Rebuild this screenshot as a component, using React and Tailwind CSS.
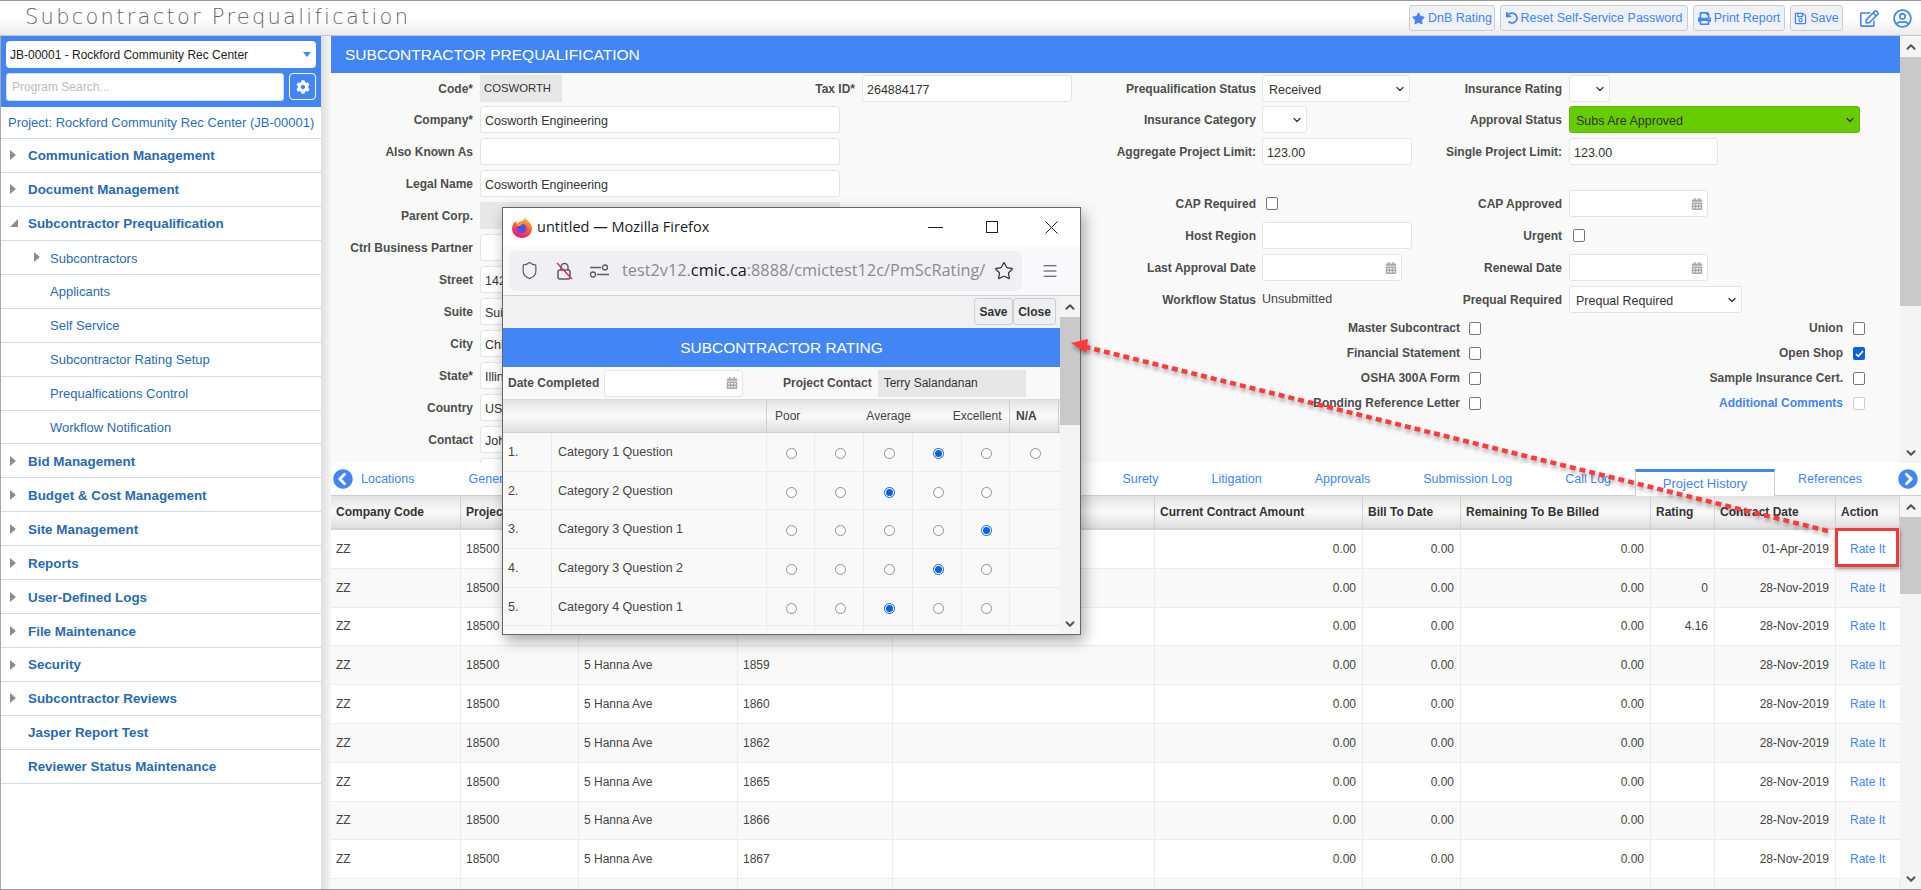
import { ChevronDown, ChevronUp, Menu, Shield, Star } from "lucide-react";
import {
  FaCalendarAlt,
  FaChevronCircleLeft,
  FaChevronCircleRight,
  FaCog,
  FaPrint,
  FaRegEdit,
  FaRegSave,
  FaRegUserCircle,
  FaStar,
  FaUndo,
} from "react-icons/fa";

const MENU = [
  { label: "Communication Management", level: 0, arrow: "right" },
  { label: "Document Management", level: 0, arrow: "right" },
  { label: "Subcontractor Prequalification", level: 0, arrow: "down" },
  { label: "Subcontractors", level: 1, arrow: "right" },
  { label: "Applicants", level: 1 },
  { label: "Self Service", level: 1 },
  { label: "Subcontractor Rating Setup", level: 1 },
  { label: "Prequalfications Control", level: 1 },
  { label: "Workflow Notification", level: 1 },
  { label: "Bid Management", level: 0, arrow: "right" },
  { label: "Budget & Cost Management", level: 0, arrow: "right" },
  { label: "Site Management", level: 0, arrow: "right" },
  { label: "Reports", level: 0, arrow: "right" },
  { label: "User-Defined Logs", level: 0, arrow: "right" },
  { label: "File Maintenance", level: 0, arrow: "right" },
  { label: "Security", level: 0, arrow: "right" },
  { label: "Subcontractor Reviews", level: 0, arrow: "right" },
  { label: "Jasper Report Test", level: 0 },
  { label: "Reviewer Status Maintenance", level: 0 },
];

const TABLE_COLS =
  "grid grid-cols-[130px_118px_159px_155px_262px_208px_98px_190px_64px_121px_64px]";

const HEADERS = [
  "Company Code",
  "Project Code",
  "Project Name",
  "Contract Code",
  "",
  "Current Contract Amount",
  "Bill To Date",
  "Remaining To Be Billed",
  "Rating",
  "Contract Date",
  "Action",
];

const ROWS = [
  { id: "1856", rating: "", date: "01-Apr-2019" },
  { id: "1857", rating: "0", date: "28-Nov-2019" },
  { id: "1858", rating: "4.16", date: "28-Nov-2019" },
  { id: "1859", rating: "", date: "28-Nov-2019" },
  { id: "1860", rating: "", date: "28-Nov-2019" },
  { id: "1862", rating: "", date: "28-Nov-2019" },
  { id: "1865", rating: "", date: "28-Nov-2019" },
  { id: "1866", rating: "", date: "28-Nov-2019" },
  { id: "1867", rating: "", date: "28-Nov-2019" },
];

const QUESTIONS = [
  { n: "1.", q: "Category 1 Question", checked: 3, na: true },
  { n: "2.", q: "Category 2 Question", checked: 2 },
  { n: "3.", q: "Category 3 Question 1", checked: 4 },
  { n: "4.", q: "Category 3 Question 2", checked: 3 },
  { n: "5.", q: "Category 4 Question 1", checked: 2 },
];

const Label = ({ children, className }) => (
  <div className={`shrink-0 text-right text-[12px] font-bold leading-[29px] whitespace-nowrap text-[#4d4d4d] ${className}`}>
    {children}
  </div>
);

const Input = ({ value, className, bg = "bg-white" }) => (
  <input
    readOnly
    value={value || ""}
    className={`h-[27px] shrink-0 rounded-[3px] border border-[#e2e4e8] px-[4px] pt-[3px] text-[12.5px] text-[#333] outline-none ${bg} ${className}`}
  />
);

const ReadOnly = ({ value, className, size = "text-[12px]" }) => (
  <div className={`h-[27px] shrink-0 whitespace-nowrap bg-[#e7e7e7] px-[4px] leading-[27px] text-[#333] ${size} ${className}`}>
    {value}
  </div>
);

const Select = ({ value, className, bg = "bg-white border-[#e2e4e8]" }) => (
  <div className={`flex h-[27px] shrink-0 items-center justify-between rounded-[3px] border pl-[6px] pr-[3px] text-[12.5px] text-[#333] ${bg} ${className}`}>
    <span className="mt-[3px]">{value}</span>
    <ChevronDown size={12} strokeWidth={2.5} className="text-[#333]" />
  </div>
);

const DateInput = ({ className }) => (
  <div className={`flex h-[27px] shrink-0 items-center justify-end rounded-[3px] border border-[#e2e4e8] bg-white pr-[4px] ${className}`}>
    <FaCalendarAlt size={12} className="text-[#a9a9a9]" />
  </div>
);

const Check = ({ checked, faint, className = "" }) =>
  checked ? (
    <span className={`flex h-[13px] w-[12px] shrink-0 items-center justify-center rounded-[2px] bg-[#0b62d8] ${className}`}>
      <svg width="9" height="9" viewBox="0 0 9 9">
        <path d="M1 5l2.3 2.3L8 2" fill="none" stroke="#fff" strokeWidth="1.6" />
      </svg>
    </span>
  ) : (
    <span className={`block h-[13px] w-[12px] shrink-0 rounded-[2px] border bg-white ${faint ? "border-[#cfcfcf]" : "border-[#77757f]"} ${className}`} />
  );

const Radio = ({ on }) =>
  on ? (
    <span className="flex h-[11px] w-[11px] items-center justify-center rounded-full border border-[#0b62d8] bg-white">
      <span className="h-[7px] w-[7px] rounded-full bg-[#0b62d8]" />
    </span>
  ) : (
    <span className="h-[11px] w-[11px] rounded-full border border-[#8f8f8f] bg-white" />
  );

const Scrollbar = ({ thumb, className }) => (
  <div className={`flex shrink-0 flex-col bg-[#f4f4f4] ${className}`}>
    <div className="flex h-[21px] shrink-0 items-center justify-center">
      <ChevronUp size={14} strokeWidth={3.5} className="text-[#555]" />
    </div>
    <div className={`shrink-0 bg-[#c9c9c9] ${thumb}`} />
    <div className="flex-1" />
    <div className="flex h-[21px] shrink-0 items-center justify-center">
      <ChevronDown size={14} strokeWidth={3.5} className="text-[#555]" />
    </div>
  </div>
);

const ToolButton = ({ icon, className, children }) => (
  <button className={`flex h-[26px] items-center justify-center gap-[3px] rounded-[3px] border border-[#c8ccd3] bg-[#eff1f4] text-[12.5px] whitespace-nowrap text-[#4285f4] ${className}`}>
    {icon}
    {children}
  </button>
);

const FirefoxLogo = () => (
  <svg width="20" height="21" viewBox="0 0 20 21">
    <defs>
      <linearGradient id="ffBody" x1="0.7" y1="0" x2="0.3" y2="1">
        <stop offset="0" stopColor="#ffbd2e" />
        <stop offset="0.5" stopColor="#ff5a36" />
        <stop offset="1" stopColor="#e31587" />
      </linearGradient>
    </defs>
    <path d="M13 0c.5 2 2 3 3.500 4.500C19 7 20 9 20 11.500 20 17 15.500 21 10 21S0 17 0 11.500C0 8 2 5 4.500 4c-.5 1.500 0 2.500.5 3C6 5 9 4.500 10 4c1.500-.8 3-2 3-4z" fill="url(#ffBody)" />
    <circle cx="9.500" cy="11.500" r="5" fill="#7542e5" />
    <circle cx="10.500" cy="11" r="2.400" fill="#3a5bd9" />
    <path d="M4 9c2-3 6-4 9-2.500-2 .2-4 1-5 2.500-1.500 0-3 0-4 0z" fill="#ff9a1f" />
  </svg>
);

const Sidebar = () => (
  <aside className="flex w-[321px] shrink-0 flex-col border-l border-[#a8a8a8] bg-white">
    <div className="flex h-[71px] shrink-0 flex-col gap-[5px] bg-[#4285f4] pl-[5px] pr-[5px] pt-[5px]">
      <div className="flex h-[27px] w-[310px] items-center justify-between rounded-[4px] bg-white pl-[4px] pr-[5px] text-[12px] text-[#222]">
        <span>JB-00001 - Rockford Community Rec Center</span>
        <span className="h-0 w-0 border-x-[4px] border-t-[5px] border-x-transparent border-t-[#4285f4]" />
      </div>
      <div className="flex items-start gap-[5px]">
        <input
          placeholder="Program Search..."
          className="h-[28px] w-[278px] rounded-[3px] border border-[#d7dce3] bg-white px-[5px] text-[12px] outline-none placeholder:text-[#bdbdbd]"
        />
        <button className="flex h-[27px] w-[27px] items-center justify-center rounded-[4px] border border-white bg-[#4285f4]">
          <FaCog size={14} className="text-white" />
        </button>
      </div>
    </div>
    <div className="flex h-[32px] shrink-0 items-center border-b border-[#d5dbe2] pl-[7px] text-[13px] text-[#2a6ebb] whitespace-nowrap">
      Project: Rockford Community Rec Center (JB-00001)
    </div>
    {MENU.map((m) => (
      <div key={m.label} className="flex h-[33.95px] shrink-0 items-center border-b border-[#d5dbe2] text-[13px] text-[#2a6ab0]">
        <div className={`flex shrink-0 items-center ${m.level ? "w-[49px] pl-[33px]" : "w-[27px] pl-[9px]"}`}>
          {m.arrow === "right" && (
            <span className="h-0 w-0 border-y-[5px] border-l-[6px] border-y-transparent border-l-[#8c8c8c]" />
          )}
          {m.arrow === "down" && (
            <span className="h-0 w-0 border-b-[8px] border-l-[8px] border-b-[#8c8c8c] border-l-transparent" />
          )}
        </div>
        <span className={m.level ? "mt-[2px]" : "mt-[2px] text-[13.4px] font-bold"}>{m.label}</span>
      </div>
    ))}
  </aside>
);

const LeftForm = () => (
  <div className="flex w-[781px] shrink-0 flex-col">
    <div className="flex h-[31px] shrink-0 items-start">
      <Label className="w-[142px]">Code*</Label>
      <ReadOnly value="COSWORTH" size="text-[11.3px]" className="ml-[7px] w-[82px]" />
      <Label className="w-[293px]">Tax ID*</Label>
      <Input value="264884177" className="ml-[7px] w-[210px]" />
    </div>
    {[
      ["Company*", "Cosworth Engineering"],
      ["Also Known As", ""],
      ["Legal Name", "Cosworth Engineering"],
      ["Parent Corp.", null],
      ["Ctrl Business Partner", ""],
      ["Street", "142 Main St"],
      ["Suite", "Suite 200"],
      ["City", "Chicago"],
      ["State*", "Illinois"],
      ["Country", "USA"],
      ["Contact", "John Smith"],
      ["", ""],
    ].map(([label, value], i) => (
      <div key={i} className="flex h-[32px] shrink-0 items-start">
        <Label className="w-[142px]">{label}</Label>
        {value === null ? (
          <ReadOnly className="ml-[7px] w-[360px]" />
        ) : (
          <Input value={value} className="ml-[7px] w-[360px]" />
        )}
      </div>
    ))}
  </div>
);

const RightForm = () => (
  <div className="flex flex-1 flex-col">
    <div className="flex shrink-0">
      <div className="flex w-[318px] shrink-0 flex-col">
        <div className="flex h-[31px] items-start">
          <Label className="w-[144px]">Prequalification Status</Label>
          <Select value="Received" className="ml-[6px] w-[148px]" />
        </div>
        <div className="flex h-[32px] items-start">
          <Label className="w-[144px]">Insurance Category</Label>
          <Select className="ml-[6px] w-[45px]" />
        </div>
        <div className="mb-[20px] flex h-[32px] items-start">
          <Label className="w-[144px]">Aggregate Project Limit:</Label>
          <Input value="123.00" className="ml-[6px] w-[150px]" />
        </div>
        <div className="flex h-[32px] items-start">
          <Label className="w-[144px]">CAP Required</Label>
          <Check className="ml-[10px] mt-[7px]" />
        </div>
        <div className="flex h-[32px] items-start">
          <Label className="w-[144px]">Host Region</Label>
          <Input className="ml-[6px] w-[150px]" />
        </div>
        <div className="flex h-[32px] items-start">
          <Label className="w-[144px]">Last Approval Date</Label>
          <DateInput className="ml-[6px] w-[140px]" />
        </div>
        <div className="flex h-[30px] items-start">
          <Label className="w-[144px]">Workflow Status</Label>
          <span className="ml-[6px] text-[12.5px] leading-[27px] text-[#444]">Unsubmitted</span>
        </div>
      </div>
      <div className="flex flex-1 flex-col">
        <div className="flex h-[31px] items-start">
          <Label className="w-[132px]">Insurance Rating</Label>
          <Select className="ml-[7px] w-[41px]" />
        </div>
        <div className="flex h-[32px] items-start">
          <Label className="w-[132px]">Approval Status</Label>
          <Select value="Subs Are Approved" bg="bg-[#66cc00] border-[#5dbb00]" className="ml-[7px] w-[291px]" />
        </div>
        <div className="mb-[20px] flex h-[32px] items-start">
          <Label className="w-[132px]">Single Project Limit:</Label>
          <Input value="123.00" className="ml-[7px] w-[149px]" />
        </div>
        <div className="flex h-[32px] items-start">
          <Label className="w-[132px]">CAP Approved</Label>
          <DateInput className="ml-[7px] w-[139px]" />
        </div>
        <div className="flex h-[32px] items-start">
          <Label className="w-[132px]">Urgent</Label>
          <Check className="ml-[11px] mt-[7px]" />
        </div>
        <div className="flex h-[32px] items-start">
          <Label className="w-[132px]">Renewal Date</Label>
          <DateInput className="ml-[7px] w-[139px]" />
        </div>
        <div className="flex h-[30px] items-start">
          <Label className="w-[132px]">Prequal Required</Label>
          <Select value="Prequal Required" className="ml-[7px] w-[173px]" />
        </div>
      </div>
    </div>
    {[
      ["Master Subcontract", "Union"],
      ["Financial Statement", "Open Shop"],
      ["OSHA 300A Form", "Sample Insurance Cert."],
      ["Bonding Reference Letter", "Additional Comments"],
    ].map(([a, b], i) => (
      <div key={a} className="flex h-[25px] shrink-0 items-center">
        <Label className="w-[348px]">{a}</Label>
        <Check className="ml-[9px]" />
        <Label className={i === 3 ? "w-[362px] text-[#4285f4]" : "w-[362px]"}>{b}</Label>
        <Check className="ml-[10px]" checked={i === 1} faint={i === 3} />
      </div>
    ))}
  </div>
);

const Tabs = () => (
  <div className="flex h-[33px] shrink-0 items-end justify-between border-b border-[#cfcfcf] bg-white text-[12.5px] text-[#4285f4]">
    <div className="flex h-[32px] items-center pl-[2px]">
      <FaChevronCircleLeft size={20} />
      <span className="ml-[8px]">Locations</span>
      <span className="ml-[54px]">General</span>
    </div>
    <div className="flex h-[32px] items-end pr-[3px]">
      <div className="flex h-[32px] items-center gap-[53px]">
        <span>Surety</span>
        <span>Litigation</span>
        <span>Approvals</span>
        <span>Submission Log</span>
        <span>Call Log</span>
      </div>
      <div className="relative top-[1px] ml-[24px] flex h-[27px] w-[140px] items-center justify-center border-x border-t-[3px] border-x-[#cfcfcf] border-t-[#4285f4] bg-white text-[13px]">
        Project History
      </div>
      <div className="flex h-[32px] items-center">
        <span className="ml-[23px]">References</span>
        <FaChevronCircleRight size={20} className="ml-[36px]" />
      </div>
    </div>
  </div>
);

const HistoryTable = () => (
  <div className="flex min-h-0 flex-1">
    <div className="w-[1569px] shrink-0 overflow-hidden">
      <div className={`${TABLE_COLS} h-[34px] border-b-2 border-[#d4d4d4] bg-linear-to-b from-[#e3e3e3] via-[#fafafa] to-[#dedede] text-[12px] font-bold text-[#333]`}>
        {HEADERS.map((h, i) => (
          <div key={i} className="flex items-center overflow-hidden whitespace-nowrap border-r border-[#d2d2d2] pl-[5px]">
            {h}
          </div>
        ))}
      </div>
      {ROWS.map((r, i) => (
        <div
          key={r.id}
          className={`${TABLE_COLS} h-[38.8px] border-b border-[#ececec] text-[12px] text-[#444] ${i % 2 ? "bg-[#f9f9f9]" : "bg-white"}`}
        >
          <div className="flex items-center border-r border-[#ececec] pl-[5px]">ZZ</div>
          <div className="flex items-center border-r border-[#ececec] pl-[5px]">18500</div>
          <div className="flex items-center border-r border-[#ececec] pl-[5px]">5 Hanna Ave</div>
          <div className="flex items-center border-r border-[#ececec] pl-[5px]">{r.id}</div>
          <div className="border-r border-[#ececec]" />
          <div className="flex items-center justify-end border-r border-[#ececec] pr-[6px]">0.00</div>
          <div className="flex items-center justify-end border-r border-[#ececec] pr-[6px]">0.00</div>
          <div className="flex items-center justify-end border-r border-[#ececec] pr-[6px]">0.00</div>
          <div className="flex items-center justify-end border-r border-[#ececec] pr-[6px]">{r.rating}</div>
          <div className="flex items-center justify-end border-r border-[#ececec] pr-[6px]">{r.date}</div>
          <div className="flex items-center pl-[14px] text-[#4285f4]">Rate It</div>
        </div>
      ))}
      {/* next row only just shows above the fold */}
      <div className={`${TABLE_COLS} h-[12px] bg-[#f9f9f9]`}>
        {HEADERS.map((h, i) => (
          <div key={i} className="border-r border-[#ececec]" />
        ))}
      </div>
    </div>
    <Scrollbar thumb="h-[77px]" className="w-[21px]" />
  </div>
);

const RatingPopup = () => (
  <div className="absolute left-[502px] top-[206px] flex h-[428px] w-[579px] flex-col border border-[#666] bg-white shadow-[3px_6px_14px_rgba(0,0,0,0.35)]">
    <div className="flex h-[38px] shrink-0 items-center pl-[9px] font-['Open_Sans',sans-serif] text-[14.5px] text-[#1a1a1a]">
      <FirefoxLogo />
      <span className="ml-[5px]">untitled — Mozilla Firefox</span>
      <div className="ml-auto flex items-center">
        <span className="mr-[43px] h-[1px] w-[15px] bg-[#222]" />
        <span className="mr-[47px] h-[12px] w-[12px] border border-[#222]" />
        <svg width="13" height="13" viewBox="0 0 13 13" className="mr-[22px]">
          <path d="M0.500 0.500l12 12M12.500 0.500l-12 12" stroke="#222" strokeWidth="1" fill="none" />
        </svg>
      </div>
    </div>
    <div className="flex h-[50px] shrink-0 items-center border-b border-[#cfcfd8] bg-[#f9f9fb] pl-[6px]">
      <div className="flex h-[40px] w-[513px] items-center rounded-[6px] bg-[#f0f0f4] pl-[11px] text-[#5b5b66]">
        <Shield size={19} strokeWidth={1.5} />
        <svg width="19" height="20" viewBox="0 0 19 20" fill="none" className="ml-[16px]">
          <path d="M6 9V6a3.500 3.500 0 0 1 7 0v3" stroke="#5b5b66" strokeWidth="1.500" />
          <rect x="3" y="9" width="12" height="9" rx="2" stroke="#5b5b66" strokeWidth="1.500" />
          <path d="M2 2l15 16" stroke="#e22850" strokeWidth="1.500" />
        </svg>
        <svg width="19" height="14" viewBox="0 0 19 14" fill="none" className="ml-[16px]">
          <path d="M0 3.500h11M7 10.500h12" stroke="#5b5b66" strokeWidth="1.500" />
          <circle cx="15" cy="3.500" r="2.500" stroke="#5b5b66" strokeWidth="1.300" />
          <circle cx="3" cy="10.500" r="2.500" stroke="#5b5b66" strokeWidth="1.300" />
        </svg>
        <span className="ml-[13px] w-[364px] overflow-hidden whitespace-nowrap font-['Open_Sans',sans-serif] text-[16.3px] text-[#8a8a92]">
          test2v12.<span className="text-[#15141a]">cmic.ca</span>:8888/cmictest12c/PmScRating/
        </span>
        <Star size={20} strokeWidth={1.5} className="ml-[8px] text-[#333]" />
      </div>
      <Menu size={18} strokeWidth={1.5} className="ml-[19px] text-[#444]" />
    </div>
    <div className="flex min-h-0 flex-1">
      <div className="flex w-[557px] shrink-0 flex-col overflow-hidden bg-[#f9f9f9]">
        <div className="flex h-[32px] shrink-0 items-start justify-end bg-[#f1f1f1] pr-[4px] pt-[2px]">
          <button className="h-[27px] w-[39px] rounded-[3px] border border-[#ccd0d6] bg-[#eeeff1] text-[12px] font-bold text-[#333]">Save</button>
          <button className="h-[27px] w-[43px] rounded-[3px] border border-[#ccd0d6] bg-[#eeeff1] text-[12px] font-bold text-[#333]">Close</button>
        </div>
        <div className="flex h-[39px] shrink-0 items-center justify-center bg-[#4285f4] text-[15.5px] text-white">
          SUBCONTRACTOR RATING
        </div>
        <div className="flex h-[33px] shrink-0 items-center border-b border-[#dcdcdc] pl-[5px]">
          <Label className="w-[90px] text-left">Date Completed</Label>
          <DateInput className="ml-[6px] w-[139px]" />
          <Label className="ml-[40px]">Project Contact</Label>
          <ReadOnly value="Terry Salandanan" className="ml-[6px] w-[148px] px-[6px]" />
        </div>
        <div className="flex h-[33px] shrink-0 border-b border-[#cfcfcf] bg-linear-to-b from-[#e3e3e3] via-[#fafafa] to-[#dedede] text-[12px] text-[#444]">
          <div className="w-[264px] shrink-0 border-r border-[#cfcfcf]" />
          <div className="flex w-[243px] shrink-0 items-center border-r border-[#cfcfcf] pl-[8px]">
            <span>Poor</span>
            <span className="ml-[66px]">Average</span>
            <span className="ml-[42px]">Excellent</span>
          </div>
          <div className="flex w-[49px] shrink-0 items-center border-r border-[#cfcfcf] pl-[6px] font-bold">N/A</div>
        </div>
        {[...QUESTIONS, { n: "", q: "", checked: -1, blank: true }].map((row) => (
          <div
            key={row.n || "partial"}
            className="grid h-[38.7px] shrink-0 grid-cols-[49px_215px_48px_49px_49px_49px_48px_49px] border-b border-[#ececec] text-[12.5px] text-[#444]"
          >
            <div className="flex items-center border-r border-[#ececec] pl-[5px] pt-[1px]">{row.n}</div>
            <div className="flex items-center border-r border-[#ececec] pl-[6px] pt-[1px]">{row.q}</div>
            {[0, 1, 2, 3, 4].map((c) => (
              <div key={c} className="flex items-center justify-center border-r border-[#ececec] pl-[2px] pt-[3px]">
                {!row.blank && <Radio on={row.checked === c} />}
              </div>
            ))}
            <div className="flex items-center justify-center pl-[2px] pt-[3px]">{row.na && <Radio />}</div>
          </div>
        ))}
      </div>
      <Scrollbar thumb="h-[108px]" className="w-[20px]" />
    </div>
  </div>
);

const App = () => (
  <div className="relative flex h-[890px] w-[1921px] flex-col overflow-hidden border-y border-[#999] bg-white font-['Liberation_Sans',Arial,sans-serif]">
    {/* Header */}
    <header className="flex h-[35px] shrink-0 items-center border-b border-[#c4c4c4] bg-linear-to-b from-white from-50% to-[#ebebeb] pl-[25px]">
      <h1 className="font-['DejaVu_Sans',sans-serif] text-[21px] font-extralight tracking-[2.25px] text-[#666]">
        Subcontractor Prequalification
      </h1>
      <div className="ml-auto flex items-center gap-[5px] pr-[9px]">
        <ToolButton icon={<FaStar size={13} />} className="w-[86px]">DnB Rating</ToolButton>
        <ToolButton icon={<FaUndo size={12} />} className="w-[188px]">Reset Self-Service Password</ToolButton>
        <ToolButton icon={<FaPrint size={13} />} className="w-[92px]">Print Report</ToolButton>
        <ToolButton icon={<FaRegSave size={13} />} className="w-[53px]">Save</ToolButton>
        <FaRegEdit size={19} className="ml-[12px] text-[#4285f4]" />
        <FaRegUserCircle size={19} className="ml-[9px] text-[#4285f4]" />
      </div>
    </header>

    <div className="flex min-h-0 flex-1">
      <Sidebar />
      <div className="w-[10px] shrink-0 bg-linear-to-r from-[#dddddd] to-[#f6f6f6]" />

      {/* Main */}
      <main className="flex min-w-0 flex-1 flex-col">
        <div className="flex h-[427px] shrink-0">
          <div className="flex w-[1569px] shrink-0 flex-col">
            <div className="flex h-[37px] shrink-0 items-center bg-[#4285f4] pl-[14px] pt-[1px] text-[15.5px] text-white">
              SUBCONTRACTOR PREQUALIFICATION
            </div>
            <div className="flex min-h-0 flex-1 overflow-hidden bg-[#f9f9f9] pt-[2px]">
              <LeftForm />
              <RightForm />
            </div>
          </div>
          <Scrollbar thumb="h-[249px]" className="w-[21px]" />
        </div>
        <Tabs />
        <HistoryTable />
      </main>
    </div>

    <RatingPopup />

    {/* Callouts */}
    <div className="absolute left-[1835px] top-[527px] h-[39px] w-[64px] border-[3px] border-[#f03a3a] shadow-[1px_2px_4px_rgba(0,0,0,0.4)]" />
    <svg className="pointer-events-none absolute inset-0 drop-shadow-[1px_3px_2px_rgba(0,0,0,0.35)]" width="1921" height="890">
      <line x1="1828" y1="530" x2="1086" y2="346" stroke="#ff3b3b" strokeWidth="4.5" strokeDasharray="6 4" />
      <polygon points="1071,342 1088,338 1086,352" fill="#ff3b3b" />
    </svg>
  </div>
);

export default App;
